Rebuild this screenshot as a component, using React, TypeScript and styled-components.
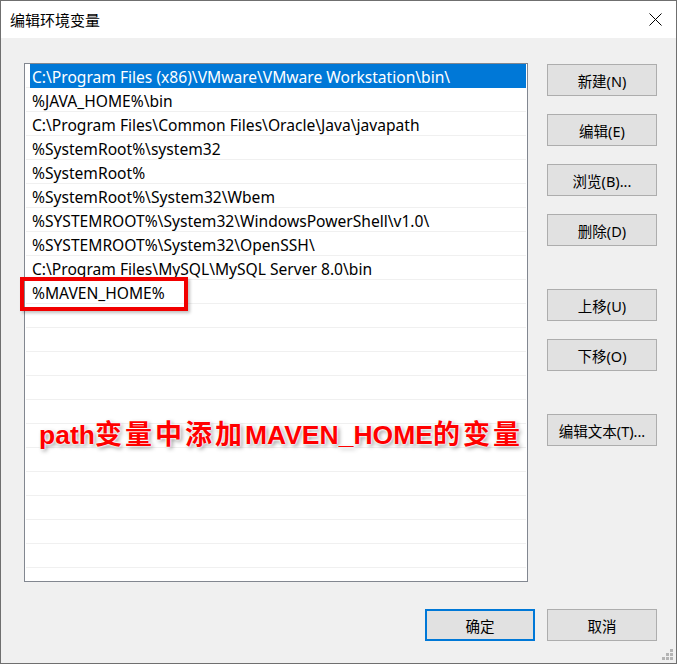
import React from "react";
import styled, { createGlobalStyle } from "styled-components";

const GlobalStyle = createGlobalStyle`
  html, body { margin: 0; padding: 0; background: #ffffff; }
  * { box-sizing: border-box; }
`;

const UI_FONT = `"Segoe UI", "Noto Sans", "Noto Sans CJK SC", sans-serif`;

const Window = styled.div`
  position: relative;
  width: 677px;
  height: 664px;
  border: 1px solid #6f6f6f;
  background: #f0f0f0;
  display: flex;
  flex-direction: column;
  font-family: ${UI_FONT};
  color: #000;
`;

const TitleBar = styled.div`
  height: 37px;
  background: #ffffff;
  display: flex;
  align-items: center;
  justify-content: space-between;
  padding: 0 14px 0 9px;
`;

const Title = styled.span`
  font-size: 15px;
  font-family: "Noto Sans CJK SC", sans-serif;
`;

const CloseButton = styled.div`
  width: 14px;
  height: 14px;
  display: flex;
  align-items: center;
  justify-content: center;
`;

const Body = styled.div`
  flex: 1;
  display: flex;
  flex-direction: column;
  padding: 25px 19px 22px 23px;
`;

const Main = styled.div`
  display: flex;
  gap: 19px;
`;

const ListBox = styled.div`
  width: 504px;
  height: 519px;
  border: 1px solid #828790;
  background: #ffffff;
  overflow: hidden;
`;

const Row = styled.div`
  height: 24px;
  margin: 0 1px 0 1px;
  padding-left: 4px;
  border-bottom: 1px solid #f0f0f0;
  display: flex;
`;

const Label = styled.div<{ $selected?: boolean }>`
  flex: 1;
  height: 24px;
  padding: 2px 0 0 2px;
  display: flex;
  align-items: center;
  font-size: 15.6px;
  white-space: nowrap;
  background: ${(p) => (p.$selected ? "#0078d7" : "transparent")};
  color: ${(p) => (p.$selected ? "#ffffff" : "#000000")};
`;

const Side = styled.div`
  display: flex;
  flex-direction: column;
  padding-top: 1px;
`;

const Button = styled.button<{ $gap?: number; $default?: boolean }>`
  width: 110px;
  height: 32px;
  margin-top: ${(p) => p.$gap ?? 0}px;
  background: #e1e1e1;
  border: ${(p) => (p.$default ? "2px solid #0078d7" : "1px solid #adadad")};
  font-family: ${UI_FONT};
  font-size: 14.5px;
  color: #000;
  padding: 0;
  display: flex;
  align-items: center;
  justify-content: center;
`;

const Footer = styled.div`
  margin-top: 27px;
  display: flex;
  justify-content: flex-end;
  gap: 12px;
`;

const Grip = styled.div`
  position: absolute;
  right: 2px;
  bottom: 2px;
  width: 12px;
  height: 12px;
`;

const Dot = styled.span<{ $x: number; $y: number }>`
  position: absolute;
  width: 3px;
  height: 3px;
  background: #b4b4b4;
  left: ${(p) => p.$x}px;
  top: ${(p) => p.$y}px;
`;

const Highlight = styled.div`
  position: absolute;
  left: 19px;
  top: 276px;
  width: 168px;
  height: 34px;
  border: 4px solid #f20000;
  box-shadow: 2px 2px 3px rgba(0, 0, 0, 0.25);
`;

const Annotation = styled.div`
  position: absolute;
  left: 38px;
  top: 412px;
  font-family: "Liberation Sans", Arial, "Noto Sans CJK SC", sans-serif;
  font-weight: bold;
  font-size: 26.5px;
  color: #ff0000;
  white-space: nowrap;
  text-shadow: 0 0 2px #fff, 0 0 2px #fff, 0 0 3px #fff, 2px 2px 4px rgba(0, 0, 0, 0.45);
`;

const Cjk = styled.span`
  font-family: "Noto Sans CJK SC", sans-serif;
  font-weight: 700;
  font-size: 27px;
  letter-spacing: 3px;
`;

const entries = [
  "C:\\Program Files (x86)\\VMware\\VMware Workstation\\bin\\",
  "%JAVA_HOME%\\bin",
  "C:\\Program Files\\Common Files\\Oracle\\Java\\javapath",
  "%SystemRoot%\\system32",
  "%SystemRoot%",
  "%SystemRoot%\\System32\\Wbem",
  "%SYSTEMROOT%\\System32\\WindowsPowerShell\\v1.0\\",
  "%SYSTEMROOT%\\System32\\OpenSSH\\",
  "C:\\Program Files\\MySQL\\MySQL Server 8.0\\bin",
  "%MAVEN_HOME%",
];

const rows = [...entries, ...Array(12).fill("")];

const gripDots: [number, number][] = [
  [8, 0],
  [4, 4],
  [8, 4],
  [0, 8],
  [4, 8],
  [8, 8],
];

export default function App() {
  return (
    <>
      <GlobalStyle />
      <Window>
        <TitleBar>
          <Title>编辑环境变量</Title>
          <CloseButton>
            <svg width="13" height="13" viewBox="0 0 13 13">
              <path d="M0.5 0.5 L12.5 12.5 M12.5 0.5 L0.5 12.5" stroke="#000" strokeWidth="1" fill="none" />
            </svg>
          </CloseButton>
        </TitleBar>
        <Body>
          <Main>
            <ListBox>
              {rows.map((r, i) => (
                <Row key={i}>
                  <Label $selected={i === 0}>{r}</Label>
                </Row>
              ))}
            </ListBox>
            <Side>
              <Button>新建(N)</Button>
              <Button $gap={18}>编辑(E)</Button>
              <Button $gap={18}>浏览(B)...</Button>
              <Button $gap={18}>删除(D)</Button>
              <Button $gap={43}>上移(U)</Button>
              <Button $gap={18}>下移(O)</Button>
              <Button $gap={43}>编辑文本(T)...</Button>
            </Side>
          </Main>
          <Footer>
            <Button $default>确定</Button>
            <Button>取消</Button>
          </Footer>
        </Body>
        <Highlight />
        <Annotation>
          path<Cjk>变量中添加</Cjk>MAVEN_HOME<Cjk>的变量</Cjk>
        </Annotation>
        <Grip>
          {gripDots.map(([x, y], i) => (
            <Dot key={i} $x={x} $y={y} />
          ))}
        </Grip>
      </Window>
    </>
  );
}
